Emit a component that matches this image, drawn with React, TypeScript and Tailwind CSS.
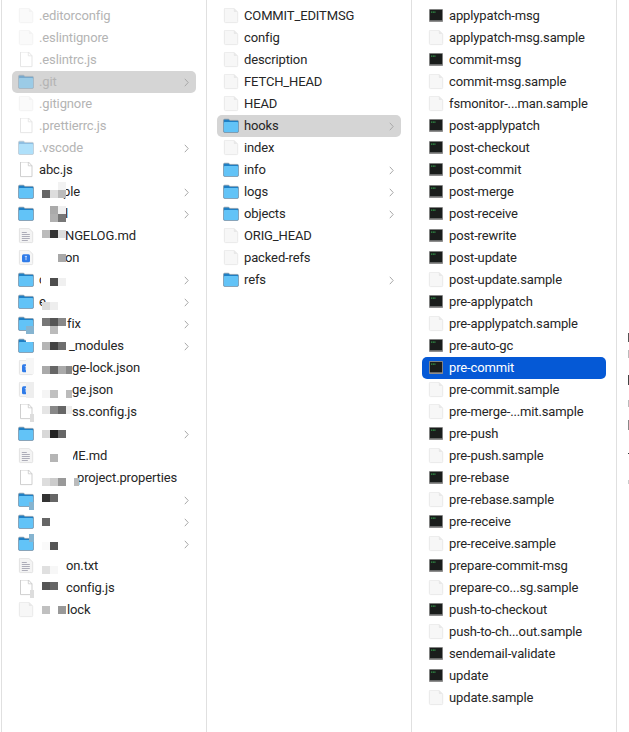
import React from 'react';

type IconKind = 'doc' | 'outline' | 'folder' | 'term' | 'text' | 'json';

interface Entry {
  name: string;
  icon: IconKind;
  dir?: boolean;
  faded?: boolean;
  state?: 'gray' | 'blue';
  textClass?: string;
}

const DocIcon = () => (
  <svg width="16" height="16" viewBox="0 0 16 16">
    <path d="M1.4 1.2a1 1 0 0 1 1-1h8.4l3.9 3.9v9.5a1 1 0 0 1-1 1H2.4a1 1 0 0 1-1-1z" fill="#f7f7f7" stroke="#e4e4e4" strokeWidth="0.8" />
    <path d="M10.8.2v3a.9.9 0 0 0 .9.9h3z" fill="#e8e8e8" />
  </svg>
);

const OutlineIcon = () => (
  <svg width="16" height="16" viewBox="0 0 16 16">
    <path d="M2.5 0h8l3.5 3.8V14.6H2.5z" fill="#ffffff" stroke="#c9c9c9" strokeWidth="0.9" strokeLinejoin="round" />
    <path d="M10.3 0v3.8H14" fill="none" stroke="#c9c9c9" strokeWidth="0.8" />
  </svg>
);

const FolderIcon = () => (
  <svg width="16" height="16" viewBox="0 0 16 16">
    <path d="M.5 2.4a1.2 1.2 0 0 1 1.2-1.2h4l1.2 1.2h7.4a1.2 1.2 0 0 1 1.2 1.2v9.6a1.2 1.2 0 0 1-1.2 1.2H1.7A1.2 1.2 0 0 1 .5 13.2z" fill="#1f7fc4" stroke="#8795a0" strokeWidth="0.7" />
    <rect x="0.9" y="4" width="14.2" height="10" rx="0.9" fill="#62c3f7" />
  </svg>
);

const TermIcon = () => (
  <svg width="16" height="16" viewBox="0 0 16 16">
    <rect x="1" y="1" width="14" height="13" rx="0.8" fill="#8e8e8e" />
    <rect x="1.9" y="1.9" width="12.2" height="10.4" fill="#1a1d1c" />
    <rect x="3.2" y="3.6" width="1" height="1" fill="#3fd660" />
    <rect x="4.8" y="3.6" width="1" height="1" fill="#3fd660" />
    <rect x="6.4" y="3.6" width="1" height="1" fill="#3fd660" />
  </svg>
);

const TextIcon = () => (
  <svg width="16" height="16" viewBox="0 0 16 16">
    <path d="M1.4 1.2a1 1 0 0 1 1-1h8.4l3.9 3.9v9.5a1 1 0 0 1-1 1H2.4a1 1 0 0 1-1-1z" fill="#f4f4f4" stroke="#dcdcdc" strokeWidth="0.8" />
    <path d="M3.8 4.5h5M3.8 6.5h8M3.8 8.5h8M3.8 10.5h8M3.8 12.5h6" stroke="#a5a5b2" strokeWidth="0.9" />
  </svg>
);

const JsonIcon = () => (
  <svg width="16" height="16" viewBox="0 0 16 16">
    <path d="M1.4 1.2a1 1 0 0 1 1-1h8.4l3.9 3.9v9.5a1 1 0 0 1-1 1H2.4a1 1 0 0 1-1-1z" fill="#f6f6f6" stroke="#dedede" strokeWidth="0.8" />
    <rect x="4" y="4.2" width="8" height="8" rx="1.5" fill="#2f7be8" />
    <path d="M6.8 6.4h2.2M8 6.4v3.8" stroke="#cfe2ff" strokeWidth="0.9" />
  </svg>
);

const icons: Record<IconKind, React.FC> = {
  doc: DocIcon,
  outline: OutlineIcon,
  folder: FolderIcon,
  term: TermIcon,
  text: TextIcon,
  json: JsonIcon,
};

const col1: Entry[] = [
  { name: '.editorconfig', icon: 'doc', faded: true },
  { name: '.eslintignore', icon: 'doc', faded: true },
  { name: '.eslintrc.js', icon: 'outline', faded: true },
  { name: '.git', icon: 'folder', dir: true, faded: true, state: 'gray' },
  { name: '.gitignore', icon: 'doc', faded: true },
  { name: '.prettierrc.js', icon: 'outline', faded: true },
  { name: '.vscode', icon: 'folder', dir: true, faded: true },
  { name: 'abc.js', icon: 'outline' },
  { name: 'ple', icon: 'folder', dir: true, textClass: 'pl-[24px]' },
  { name: 'l', icon: 'folder', dir: true, textClass: 'pl-[26px]' },
  { name: 'NGELOG.md', icon: 'text', textClass: 'pl-[26px]' },
  { name: 'on', icon: 'json', textClass: 'pl-[26px]' },
  { name: 'c', icon: 'folder', dir: true },
  { name: 'e', icon: 'folder', dir: true },
  { name: 'fix', icon: 'folder', dir: true, textClass: 'pl-[28px]' },
  { name: '_modules', icon: 'folder', dir: true, textClass: 'pl-[30px]' },
  { name: 'ge-lock.json', icon: 'json', textClass: 'pl-[33px]' },
  { name: 'ge.json', icon: 'json', textClass: 'pl-[33px]' },
  { name: 'ss.config.js', icon: 'outline', textClass: 'pl-[33px]' },
  { name: '', icon: 'folder', dir: true },
  { name: 'ME.md', icon: 'text', textClass: 'pl-[28px]' },
  { name: 'project.properties', icon: 'outline', textClass: 'pl-[38px]' },
  { name: '', icon: 'folder', dir: true },
  { name: '', icon: 'folder', dir: true },
  { name: '', icon: 'folder', dir: true },
  { name: 'on.txt', icon: 'text', textClass: 'pl-[27px]' },
  { name: 'config.js', icon: 'outline', textClass: 'pl-[27px]' },
  { name: 'lock', icon: 'doc', textClass: 'pl-[28px]' },
];

const col2: Entry[] = [
  { name: 'COMMIT_EDITMSG', icon: 'doc' },
  { name: 'config', icon: 'doc' },
  { name: 'description', icon: 'doc' },
  { name: 'FETCH_HEAD', icon: 'doc' },
  { name: 'HEAD', icon: 'doc' },
  { name: 'hooks', icon: 'folder', dir: true, state: 'gray' },
  { name: 'index', icon: 'doc' },
  { name: 'info', icon: 'folder', dir: true },
  { name: 'logs', icon: 'folder', dir: true },
  { name: 'objects', icon: 'folder', dir: true },
  { name: 'ORIG_HEAD', icon: 'doc' },
  { name: 'packed-refs', icon: 'doc' },
  { name: 'refs', icon: 'folder', dir: true },
];

const col3: Entry[] = [
  { name: 'applypatch-msg', icon: 'term' },
  { name: 'applypatch-msg.sample', icon: 'doc' },
  { name: 'commit-msg', icon: 'term' },
  { name: 'commit-msg.sample', icon: 'doc' },
  { name: 'fsmonitor-...man.sample', icon: 'doc' },
  { name: 'post-applypatch', icon: 'term' },
  { name: 'post-checkout', icon: 'term' },
  { name: 'post-commit', icon: 'term' },
  { name: 'post-merge', icon: 'term' },
  { name: 'post-receive', icon: 'term' },
  { name: 'post-rewrite', icon: 'term' },
  { name: 'post-update', icon: 'term' },
  { name: 'post-update.sample', icon: 'doc' },
  { name: 'pre-applypatch', icon: 'term' },
  { name: 'pre-applypatch.sample', icon: 'doc' },
  { name: 'pre-auto-gc', icon: 'term' },
  { name: 'pre-commit', icon: 'term', state: 'blue' },
  { name: 'pre-commit.sample', icon: 'doc' },
  { name: 'pre-merge-...mit.sample', icon: 'doc' },
  { name: 'pre-push', icon: 'term' },
  { name: 'pre-push.sample', icon: 'doc' },
  { name: 'pre-rebase', icon: 'term' },
  { name: 'pre-rebase.sample', icon: 'doc' },
  { name: 'pre-receive', icon: 'term' },
  { name: 'pre-receive.sample', icon: 'doc' },
  { name: 'prepare-commit-msg', icon: 'term' },
  { name: 'prepare-co...sg.sample', icon: 'doc' },
  { name: 'push-to-checkout', icon: 'term' },
  { name: 'push-to-ch...out.sample', icon: 'doc' },
  { name: 'sendemail-validate', icon: 'term' },
  { name: 'update', icon: 'term' },
  { name: 'update.sample', icon: 'doc' },
];

// redacted patches sitting on top of the first column, plus cut off text at the right edge
const patches = [
  'left-[42px] top-[190px] w-2 h-2 bg-[#666666]',
  'left-[50px] top-[190px] w-2 h-2 bg-[#dddddd]',
  'left-[58px] top-[190px] w-2 h-2 bg-[#bbbbbb]',
  'left-[58px] top-[182px] w-2 h-2 bg-[#f2f2f2]',
  'left-[50px] top-[206px] w-2 h-2 bg-[#aaaaaa]',
  'left-[50px] top-[214px] w-2 h-2 bg-[#b0b0b0]',
  'left-[58px] top-[214px] w-2 h-2 bg-[#777777]',
  'left-[58px] top-[206px] w-2 h-2 bg-[#f0f0f0]',
  'left-[42px] top-[230px] w-2 h-2 bg-[#bbbbbb]',
  'left-[50px] top-[230px] w-2 h-2 bg-[#333333]',
  'left-[58px] top-[230px] w-2 h-2 bg-[#dddddd]',
  'left-[58px] top-[254px] w-2 h-2 bg-[#a8a8a8]',
  'left-[41px] top-[272px] w-[9px] h-4 bg-white',
  'left-[50px] top-[278px] w-2 h-2 bg-[#4d4d4d]',
  'left-[58px] top-[278px] w-2 h-2 bg-[#f0f0f0]',
  'left-[42px] top-[302px] w-2 h-2 bg-[#dddddd]',
  'left-[50px] top-[302px] w-2 h-2 bg-[#eeeeee]',
  'left-[42px] top-[318px] w-2 h-2 bg-[#777777]',
  'left-[50px] top-[318px] w-2 h-2 bg-[#555555]',
  'left-[58px] top-[318px] w-2 h-2 bg-[#888888]',
  'left-[50px] top-[326px] w-2 h-2 bg-[#bbbbbb]',
  'left-[26px] top-[310px] w-2 h-2 bg-white',
  'left-[26px] top-[326px] w-2 h-2 bg-[#86b4d0]',
  'left-[34px] top-[326px] w-2 h-2 bg-white',
  'left-[42px] top-[342px] w-2 h-2 bg-[#b5b5b5]',
  'left-[50px] top-[342px] w-2 h-2 bg-[#444444]',
  'left-[58px] top-[342px] w-2 h-2 bg-[#6e6e6e]',
  'left-[26px] top-[334px] w-2 h-2 bg-white',
  'left-[42px] top-[366px] w-2 h-2 bg-[#aaaaaa]',
  'left-[50px] top-[366px] w-2 h-2 bg-[#666666]',
  'left-[58px] top-[366px] w-2 h-2 bg-[#aaaaaa]',
  'left-[66px] top-[366px] w-[6px] h-2 bg-[#888888]',
  'left-[26px] top-[358px] w-2 h-4 bg-[#f6f6f6]',
  'left-[26px] top-[382px] w-2 h-4 bg-[#eeeeee]',
  'left-[42px] top-[390px] w-2 h-2 bg-[#f5f5f5]',
  'left-[50px] top-[390px] w-2 h-2 bg-[#c0c0c0]',
  'left-[66px] top-[390px] w-[6px] h-2 bg-[#bbbbbb]',
  'left-[42px] top-[406px] w-2 h-2 bg-[#e5e5e5]',
  'left-[50px] top-[406px] w-2 h-2 bg-[#888888]',
  'left-[58px] top-[406px] w-2 h-2 bg-[#666666]',
  'left-[66px] top-[406px] w-[6px] h-2 bg-[#eeeeee]',
  'left-[30px] top-[414px] w-[4px] h-2 bg-[#dddddd]',
  'left-[42px] top-[430px] w-2 h-2 bg-[#d8d8d8]',
  'left-[50px] top-[430px] w-2 h-2 bg-[#222222]',
  'left-[58px] top-[430px] w-2 h-2 bg-[#666666]',
  'left-[34px] top-[424px] w-2 h-4 bg-white',
  'left-[50px] top-[454px] w-2 h-2 bg-[#b5b5b5]',
  'left-[58px] top-[446px] w-[15px] h-5 bg-white',
  'left-[42px] top-[478px] w-2 h-2 bg-[#dddddd]',
  'left-[50px] top-[478px] w-2 h-2 bg-[#cccccc]',
  'left-[58px] top-[478px] w-2 h-2 bg-[#999999]',
  'left-[74px] top-[478px] w-[5px] h-2 bg-[#bbbbbb]',
  'left-[42px] top-[494px] w-2 h-2 bg-[#333333]',
  'left-[50px] top-[494px] w-2 h-2 bg-[#666666]',
  'left-[29px] top-[502px] w-[5px] h-2 bg-[#86b4d0]',
  'left-[42px] top-[518px] w-2 h-2 bg-[#666666]',
  'left-[42px] top-[542px] w-2 h-2 bg-[#fafafa]',
  'left-[50px] top-[542px] w-2 h-2 bg-[#555555]',
  'left-[29px] top-[534px] w-[5px] h-2 bg-[#86b4d0]',
  'left-[42px] top-[566px] w-2 h-2 bg-[#e0e0e0]',
  'left-[50px] top-[566px] w-2 h-2 bg-[#f7f7f7]',
  'left-[42px] top-[582px] w-2 h-2 bg-[#555555]',
  'left-[50px] top-[582px] w-2 h-2 bg-[#666666]',
  'left-[30px] top-[590px] w-[4px] h-2 bg-[#dddddd]',
  'left-[42px] top-[606px] w-2 h-2 bg-[#c0c0c0]',
  'left-[58px] top-[606px] w-2 h-2 bg-[#999999]',
  'left-[628px] top-[333px] w-px h-[9px] bg-[#555555]',
  'left-[628px] top-[350px] w-px h-2 bg-[#bbbbbb]',
  'left-[628px] top-[375px] w-px h-[10px] bg-[#444444]',
  'left-[628px] top-[400px] w-px h-[7px] bg-[#bbbbbb]',
  'left-[628px] top-[420px] w-px h-[10px] bg-[#888888]',
  'left-[628px] top-[453px] w-px h-px bg-[#333333]',
  'left-[628px] top-[480px] w-px h-[4px] bg-[#cccccc]',
];

const Row: React.FC<{ entry: Entry }> = ({ entry }) => {
  const Icon = icons[entry.icon];
  const blue = entry.state === 'blue';
  const bg = blue ? 'bg-[#0559d6]' : entry.state === 'gray' ? 'bg-[#d5d5d5]' : '';
  const color = blue ? 'text-white' : entry.faded ? 'text-[#b4b4b4]' : 'text-[#262626]';

  return (
    <div className={`h-[22px] mx-[10px] pl-[6px] pr-[7px] rounded-[5px] flex items-center ${bg}`}>
      <span className={`flex shrink-0 ${entry.faded ? 'opacity-50' : ''}`}>
        <Icon />
      </span>
      <span className={`ml-[5px] text-[13px] tracking-[-0.13px] whitespace-nowrap ${color} ${entry.textClass ?? ''}`}>{entry.name}</span>
      {entry.dir && (
        <svg className="ml-auto shrink-0" width="5" height="9" viewBox="0 0 5 9">
          <path d="M.8.8l3.4 3.7L.8 8.2" fill="none" stroke="#a8a8a8" strokeWidth="1" />
        </svg>
      )}
    </div>
  );
};

const Column: React.FC<{ entries: Entry[]; first?: boolean }> = ({ entries, first }) => (
  <div className={`shrink-0 pt-[5px] border-r border-[#e0e0e0] ${first ? 'w-[206px] border-l' : 'w-[205px]'}`}>
    {entries.map((entry, i) => (
      <Row key={`${entry.name}-${i}`} entry={entry} />
    ))}
  </div>
);

const App: React.FC = () => {
  return (
    <div className="relative w-[629px] h-[732px] overflow-hidden bg-white pl-px flex font-['Roboto',sans-serif]">
      <Column entries={col1} first />
      <Column entries={col2} />
      <Column entries={col3} />
      {patches.map((p) => (
        <div key={p} className={`absolute ${p}`} />
      ))}
    </div>
  );
};

export default App;
